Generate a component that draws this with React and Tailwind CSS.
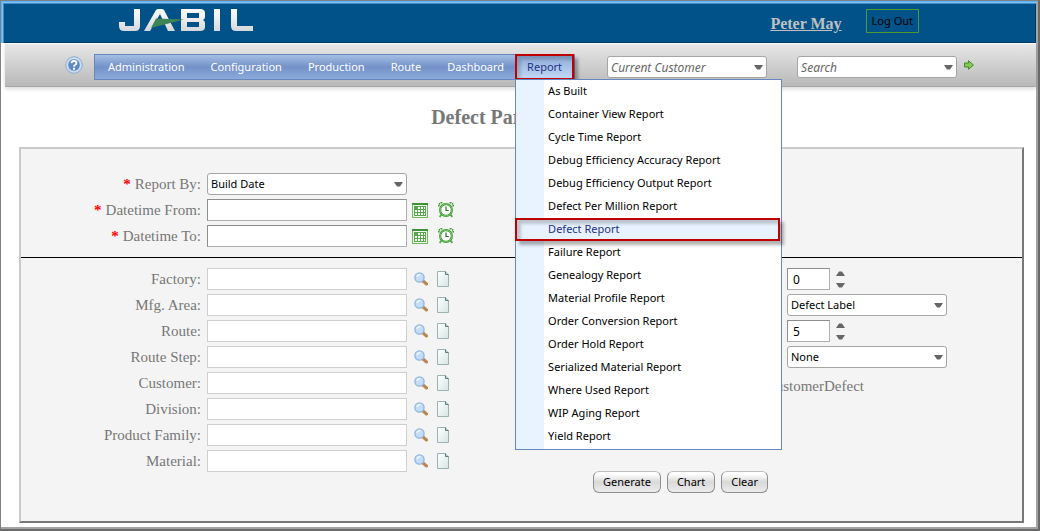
import React from "react";

const REPORTS = [
  "As Built",
  "Container View Report",
  "Cycle Time Report",
  "Debug Efficiency Accuracy Report",
  "Debug Efficiency Output Report",
  "Defect Per Million Report",
  "Defect Report",
  "Failure Report",
  "Genealogy Report",
  "Material Profile Report",
  "Order Conversion Report",
  "Order Hold Report",
  "Serialized Material Report",
  "Where Used Report",
  "WIP Aging Report",
  "Yield Report",
];

const FILTERS = ["Factory", "Mfg. Area", "Route", "Route Step", "Customer", "Division", "Product Family", "Material"];

const NAV = ["Administration", "Configuration", "Production", "Route", "Dashboard"];

function Caret({ className = "" }) {
  return (
    <svg viewBox="0 0 9 5" className={`h-[5px] w-[9px] shrink-0 ${className}`} aria-hidden="true">
      <path d="M0 0h9L6 4.5H3z" fill="#666" />
    </svg>
  );
}

function Logo() {
  return (
    <svg viewBox="0 0 134 24" className="h-6 w-[134px]" role="img" aria-label="Jabil">
      <defs>
        <linearGradient id="metal" x1="0" y1="0" x2="0" y2="1">
          <stop offset="0" stopColor="#fff" />
          <stop offset="1" stopColor="#d4d8dc" />
        </linearGradient>
      </defs>
      <g fill="url(#metal)">
        <path d="M15 1h6v17q0 5-5 5H5q-5 0-5-5v-4h6v4h9z" />
        <path d="M25 23 37 2q1-1 2-1h4q1 0 2 1l11 21h-7L41 6 31 23z" />
        <path d="M62 1h19q5 0 5 4v4q0 2-2 3 2 1 2 3v4q0 4-5 4H62zM68 5v5h12V5zM68 14v5h12v-5z" fillRule="evenodd" />
        <path d="M95 1h6v22h-6z" />
        <path d="M112 1h6v17h16v5h-17q-5 0-5-5z" />
      </g>
      <path d="M37 10.500 65 11.500 32 20z" fill="#3d8457" />
    </svg>
  );
}

function CalendarIcon() {
  return (
    <svg viewBox="0 0 16 15" className="h-[15px] w-4" aria-hidden="true">
      <path d="M0 0h16v15H0z" fill="#6fbb59" />
      <path d="M0 0h16v2H0z" fill="#3c9236" />
      <path d="M1 2h14v12H1z" fill="#f2faef" />
      <path d="M2 3h12v10H2z" fill="#57a64b" />
      <path d="M6 4h2v2H6zM9 4h2v2H9zM12 4h1v2h-1zM3 7h2v2H3zM6 7h2v2H6zM9 7h2v2H9zM12 7h1v2h-1zM3 10h2v2H3zM6 10h2v2H6zM9 10h2v2H9zM12 10h1v2h-1z" fill="#fff" />
    </svg>
  );
}

function ClockIcon() {
  return (
    <svg viewBox="0 0 16 16" className="size-4" aria-hidden="true">
      <path d="M.8 4.500V2.300L2.800.8H5M15.200 4.500V2.300L13.200.8H11" fill="none" stroke="#3f9a35" strokeWidth="1.600" strokeDasharray="1.600 0.600" />
      <path d="M3.200 12.800 1.700 15M12.800 12.800l1.500 2.200" stroke="#4fa543" strokeWidth="1.800" />
      <circle cx="8" cy="8" r="5.900" fill="#fff" stroke="#3f9a35" strokeWidth="2.200" />
      <circle cx="8" cy="8" r="5.900" fill="none" stroke="#8fd07d" strokeWidth="0.700" />
      <path d="M8 4.500v4h2.800" fill="none" stroke="#26702a" strokeWidth="1.200" />
    </svg>
  );
}

function SearchIcon() {
  return (
    <svg viewBox="0 0 14 14" className="size-3.5" aria-hidden="true">
      <path d="M9 9l3.500 3" stroke="#b98752" strokeWidth="3" strokeLinecap="round" />
      <circle cx="5.500" cy="5.500" r="4.600" fill="#c3dcf7" stroke="#8fb4e0" strokeWidth="1.300" />
      <path d="M3 5q1-2.500 3.500-2.500" stroke="#eef6ff" strokeWidth="1.300" fill="none" />
    </svg>
  );
}

function PageIcon() {
  return (
    <svg viewBox="0 0 14 16" className="h-4 w-3.5" aria-hidden="true">
      <defs>
        <linearGradient id="sheet" x1="0" y1="0" x2="1" y2="1">
          <stop offset="0" stopColor="#fff" />
          <stop offset="1" stopColor="#d6e5e4" />
        </linearGradient>
      </defs>
      <path d="M1.500.5h8l3 3v12h-11z" fill="url(#sheet)" stroke="#9ab3b2" />
      <path d="M9.500.5v3h3" fill="#c7d9d8" stroke="#5b7b7a" />
    </svg>
  );
}

function HelpIcon() {
  return (
    <svg viewBox="0 0 18 18" className="size-[18px]" aria-hidden="true">
      <circle cx="9" cy="9" r="8.300" fill="#c5d8ee" stroke="#8fadd2" />
      <circle cx="9" cy="9" r="6.300" fill="#5c8ac6" stroke="#e8f1fb" strokeWidth="0.800" />
      <path d="M6.500 7.300Q6.600 5 9 5t2.500 2q0 1.200-1.300 1.900Q9 9.500 9 10.700" fill="none" stroke="#fff" strokeWidth="1.800" />
      <path d="M8 11.800h2v1.900H8z" fill="#fff" />
    </svg>
  );
}

function GoIcon() {
  return (
    <svg viewBox="0 0 10 10" className="size-2.5" aria-hidden="true">
      <path d="M.5 3h4V.7L9.400 5 4.500 9.300V7h-4z" fill="#86c75a" stroke="#3f8a26" />
    </svg>
  );
}

function Select({ id, label, value, className }) {
  return (
    <div className={`relative flex items-center ${className}`}>
      <select
        id={id}
        aria-label={label}
        className="h-[22px] w-full appearance-none rounded-[3px] border border-[#a6a6a6] bg-white pl-[3px] pr-5 font-['Noto_Sans',sans-serif] text-[11px] text-black"
      >
        <option>{value}</option>
      </select>
      <Caret className="pointer-events-none absolute right-1" />
    </div>
  );
}

function HeaderSearch({ label, className }) {
  return (
    <div className={`relative flex items-center ${className}`}>
      <input
        aria-label={label}
        placeholder={label}
        className="h-[22px] w-[160px] rounded-[3px] border border-[#a6a6a6] bg-white pl-[3px] pr-5 text-[12px] italic placeholder:text-[#666]"
      />
      <Caret className="pointer-events-none absolute right-1" />
    </div>
  );
}

function Row({ id, label, required, children }) {
  return (
    <div className="flex h-[26px] items-center">
      <label htmlFor={id} className="mr-1.5 w-[180px] text-right font-['Liberation_Serif',serif] text-[15px] leading-5 text-[#777]">
        {required && <span className="mr-1 font-bold text-[#f00]">*</span>}
        {label}:
      </label>
      {children}
    </div>
  );
}

function Stepper({ label, value }) {
  return (
    <div className="flex h-[26px] items-center gap-1.5">
      <input
        aria-label={label}
        defaultValue={value}
        className="h-[22px] w-[43px] border border-[#b0b0b0] border-t-[#8e8e8e] border-l-[#8e8e8e] bg-white pl-[5px] text-[12px] text-black"
      />
      <div className="flex flex-col gap-[7px]">
        <button type="button" aria-label={`Increase ${label}`} className="block">
          <Caret className="rotate-180" />
        </button>
        <button type="button" aria-label={`Decrease ${label}`} className="block">
          <Caret />
        </button>
      </div>
    </div>
  );
}

function ActionButton({ children }) {
  return (
    <button
      type="button"
      className="h-[22px] rounded-[6px] border border-[#8e8e8e] border-t-[#bdbdbd] bg-linear-to-b from-white from-10% via-[#d9d9d9] via-50% to-[#ececec] px-[9px] text-[11px] leading-5 text-black"
    >
      {children}
    </button>
  );
}

function ReportMenu() {
  return (
    <ul className="absolute top-full left-0 z-10 w-[267px] border border-[#6788be] bg-linear-to-r from-[#e9f2ff] from-[28px] to-white to-[28px] pb-px">
      {REPORTS.map((name) => {
        const active = name === "Defect Report";
        return (
          <li key={name}>
            <a
              href="#"
              className={
                active
                  ? "relative mr-px -ml-px flex h-[23px] items-center border-2 border-[#c00000] bg-[#e7f1ff] pl-[31px] text-[#1e3287] shadow-[4px_4px_3px_rgba(0,0,0,0.3),inset_4px_4px_3px_rgba(0,0,0,0.18)]"
                  : "flex h-[23px] items-center pl-8 text-black"
              }
            >
              {name}
            </a>
          </li>
        );
      })}
    </ul>
  );
}

export default function App() {
  return (
    <div className="flex min-h-screen flex-col border-t border-r-2 border-b-2 border-l border-[#808080] border-r-[#6a6a6a] border-b-[#6a6a6a] bg-white font-['Noto_Sans',sans-serif] text-[11px]">
      <div className="flex grow flex-col border-r-2 border-b-2 border-[#a4a4a4]">
        <header>
          <div className="flex h-[42px] items-start bg-[#005288] pt-[3px] pl-[3px] shadow-[inset_1px_1px_0_#5bb2f2,inset_2px_2px_0_#7cc4f7,inset_3px_3px_0_#3a8bc8,inset_-1px_-1px_0_#003a63]">
            <a href="#" className="mt-1 ml-[115px]">
              <Logo />
            </a>
            <div className="mr-[117px] ml-auto flex items-start gap-6">
              <a href="#" className="mt-2 font-['Liberation_Serif',serif] text-[16px] leading-6 font-bold text-[#c0c0c0] underline">
                Peter May
              </a>
              <button type="button" className="mt-[5px] h-6 border border-[#4e9a2f] px-[5px] text-[11px] text-black">
                Log Out
              </button>
            </div>
          </div>
          <div className="mt-px ml-1 flex h-[43px] items-center border-b border-[#a8a8a8] bg-linear-to-b from-[#e7e7e7] to-[#b9b9b9] pt-1 pl-[60px] shadow-[0_2px_4px_rgba(0,0,0,0.15)]">
            <button type="button" aria-label="Help" className="mb-1">
              <HelpIcon />
            </button>
            <nav className="ml-[11px] flex h-[26px] items-stretch border border-[#6788be] bg-linear-to-b from-[#a5bfe3] via-[#7391c8] via-50% to-[#8cabdb] text-[11px] text-white">
              {NAV.map((item) => (
                <a key={item} href="#" className="flex items-center px-[13px]">
                  {item}
                </a>
              ))}
              <div className="relative -ml-0.5 flex">
                <a
                  href="#"
                  className="-my-px flex items-center border-2 border-[#c00000] bg-linear-to-b from-[#8fabd9] to-[#c0d8f5] px-2.5 text-[#1e3287] shadow-[4px_4px_3px_rgba(0,0,0,0.3),inset_4px_4px_3px_rgba(0,0,0,0.15)]"
                >
                  Report
                </a>
                <ReportMenu />
              </div>
            </nav>
            <HeaderSearch label="Current Customer" className="ml-8" />
            <HeaderSearch label="Search" className="ml-[30px]" />
            <button type="button" aria-label="Go" className="mb-1 ml-[7px]">
              <GoIcon />
            </button>
          </div>
        </header>

        <main className="flex grow flex-col pr-3 pb-1 pl-[18px]">
          <h1 className="mt-[18px] mb-[18px] text-center font-['Liberation_Serif',serif] text-[20px] leading-6 font-bold text-[#777]">
            Defect Pareto Report
          </h1>
          <form className="grow border-2 border-[#777] border-t-[#cacaca] border-l-[#cacaca] bg-[#f4f4f4] pt-[22px]">
            <div className="border-b border-black pb-2">
              <Row id="report-by" label="Report By" required>
                <Select id="report-by" value="Build Date" className="w-[200px]" />
              </Row>
              {["Datetime From", "Datetime To"].map((name) => (
                <Row key={name} id={name} label={name} required>
                  <input id={name} className="h-[22px] w-[200px] border border-[#b0b0b0] border-t-[#8e8e8e] border-l-[#8e8e8e] bg-white px-1" />
                  <button type="button" aria-label={`${name} calendar`} className="ml-[5px]">
                    <CalendarIcon />
                  </button>
                  <button type="button" aria-label={`${name} time`} className="ml-2.5">
                    <ClockIcon />
                  </button>
                </Row>
              ))}
            </div>
            <div className="flex pt-2">
              <div>
                {FILTERS.map((name) => (
                  <Row key={name} id={name} label={name}>
                    <input id={name} className="h-[22px] w-[200px] border border-[#cfcfcf] bg-white px-1" />
                    <button type="button" aria-label={`Find ${name}`} className="ml-[7px]">
                      <SearchIcon />
                    </button>
                    <button type="button" aria-label={`Clear ${name}`} className="ml-2">
                      <PageIcon />
                    </button>
                  </Row>
                ))}
              </div>
              <div className="ml-[143px] flex flex-col">
                <div className="ml-[194px]">
                  <Stepper label="Minimum" value="0" />
                  <div className="flex h-[26px] items-center">
                    <Select label="Label" value="Defect Label" className="w-[160px]" />
                  </div>
                  <Stepper label="Count" value="5" />
                  <div className="flex h-[26px] items-center">
                    <Select label="Grouping" value="None" className="w-[160px]" />
                  </div>
                </div>
                <div className="w-[271px] text-right font-['Liberation_Serif',serif] text-[15px] leading-8 text-[#777]">
                  CustomerDefect
                </div>
                <div className="mt-[69px] flex gap-1.5">
                  <ActionButton>Generate</ActionButton>
                  <ActionButton>Chart</ActionButton>
                  <ActionButton>Clear</ActionButton>
                </div>
              </div>
            </div>
          </form>
        </main>
      </div>
    </div>
  );
}
